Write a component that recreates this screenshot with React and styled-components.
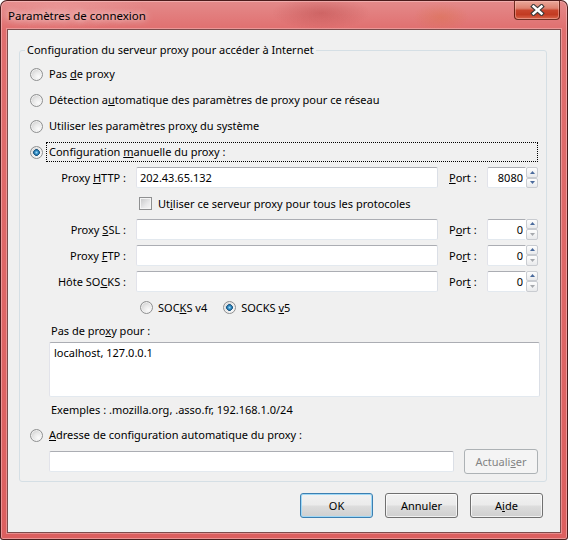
import React from 'react';
import styled, { createGlobalStyle, css } from 'styled-components';

const FONT = `"Noto Sans", "Open Sans", "Liberation Sans", sans-serif`;

const GlobalStyle = createGlobalStyle`
  *, *::before, *::after { box-sizing: border-box; }
  html, body { margin: 0; padding: 0; }
  body {
    width: 568px; height: 540px; overflow: hidden; background: #fff;
    font-family: ${FONT}; font-size: 11px; color: #000;
  }
  u { text-decoration: underline; text-underline-offset: 1px; }
`;

const Window = styled.div`
  width: 568px;
  height: 540px;
  display: flex;
  flex-direction: column;
  padding: 0 6px 6px 6px;
  border: 1px solid rgba(60, 20, 20, 0.9);
  border-radius: 7px 7px 3px 3px;
  background:
    radial-gradient(ellipse 70px 24px at 320px 12px, rgba(160, 40, 40, 0.3), transparent 70%),
    radial-gradient(ellipse 40px 20px at 440px 16px, rgba(215, 110, 60, 0.35), transparent 70%),
    radial-gradient(ellipse 120px 30px at 60px 8px, rgba(240, 170, 170, 0.45), transparent 70%),
    linear-gradient(180deg, #e48a8a 0px, #e06e6e 30px, #dc5f5f 100%);
  box-shadow: inset 0 0 0 1px rgba(255, 215, 215, 0.45);
`;

const TitleBar = styled.div`
  height: 28px;
  display: flex;
  align-items: flex-start;
  justify-content: space-between;
  padding-left: 1px;
`;

const Title = styled.div`
  margin-top: 7px;
  font-size: 11.5px;
  line-height: 15px;
  color: #000;
  text-shadow: 0 0 6px rgba(255, 255, 255, 0.85), 0 0 10px rgba(255, 255, 255, 0.5);
`;

const CloseButton = styled.div`
  width: 46px;
  height: 19px;
  margin-right: 1px;
  display: flex;
  align-items: center;
  justify-content: center;
  border: 1px solid rgba(90, 25, 15, 0.85);
  border-top: none;
  border-radius: 0 0 4px 4px;
  background: linear-gradient(180deg, #eaa89a 0%, #de8270 40%, #c8452d 52%, #c23b22 75%, #d9664c 100%);
  box-shadow: inset 0 0 0 1px rgba(255, 200, 190, 0.45);
`;

const Client = styled.div`
  flex: 1;
  display: flex;
  flex-direction: column;
  background: #f0f0f0;
  border: 1px solid rgba(95, 35, 35, 0.8);
  box-shadow: 0 0 0 1px rgba(255, 225, 225, 0.35);
`;

const GroupBox = styled.fieldset`
  margin: 12px 13px 0 11px;
  padding: 3px 6px 7px 10px;
  border: 1px solid #d5dfe5;
  border-radius: 3px;
  min-width: 0;
`;

const Legend = styled.legend`
  margin-left: -5px;
  padding: 0 2px;
  line-height: 16px;
  font-size: 11px;
`;

const OptionRow = styled.div`
  display: flex;
  align-items: center;
  height: 26px;
`;

const RadioMark = styled.span`
  flex: none;
  width: 13px;
  height: 13px;
  border-radius: 50%;
  border: 1px solid #8f9091;
  background: radial-gradient(circle at 68% 72%, #fbfbfb 0, #e8e8e8 45%, #c2c2c2 100%);
  box-shadow: inset 0 0 0 1px rgba(245, 245, 245, 0.8);
  ${p => p.$checked && css`
    background:
      radial-gradient(circle 3.6px at 5.5px 5.5px, #9ddbf8 0, #3590c8 45%, #15527f 85%, rgba(21, 82, 127, 0) 100%),
      radial-gradient(circle at 68% 72%, #fbfbfb 0, #e8e8e8 45%, #c2c2c2 100%);
  `}
`;

const OptionLabel = styled.span`
  margin-left: 3px;
  padding: 0 2px;
  line-height: 18px;
  white-space: nowrap;
  border: 1px dotted transparent;
  ${p => p.$focused && css`
    flex: 1;
    margin-right: 2px;
    border-color: #000;
  `}
`;

const ProxyGrid = styled.div`
  display: grid;
  grid-template-columns: 106px 313px 38px 52px;
  grid-template-rows: 25px repeat(5, 26px);
  align-items: center;
`;

const FieldLabel = styled.span`
  text-align: right;
  padding-right: 10px;
  white-space: nowrap;
`;

const TextBox = styled.input`
  display: block;
  width: ${p => p.$width || '100%'};
  height: 21px;
  margin: 0;
  padding: 0 3px;
  font-family: ${FONT};
  font-size: 11px;
  color: #000;
  background: #fff;
  border: 1px solid;
  border-color: #abadb3 #dbdfe6 #e3e9ef #e2e3ea;
  border-radius: 2px;
  outline: none;
  flex: ${p => (p.$grow ? 1 : 'none')};
`;

const PortLabel = styled.span`
  white-space: nowrap;
`;

const SpinBox = styled.div`
  display: flex;
  height: 21px;
  width: 51px;
`;

const SpinField = styled.input`
  width: 39px;
  height: 21px;
  margin: 0;
  padding: 0 2px 0 0;
  text-align: right;
  font-family: ${FONT};
  font-size: 11px;
  color: #000;
  background: #fff;
  border: 1px solid;
  border-color: #abadb3 transparent #e3e9ef #e2e3ea;
  border-radius: 2px 0 0 2px;
  outline: none;
`;

const SpinButtons = styled.div`
  width: 12px;
  display: flex;
  flex-direction: column;
`;

const SpinButton = styled.div`
  flex: 1;
  display: flex;
  align-items: center;
  justify-content: center;
  border: 1px solid #c9ccd1;
  border-radius: 2px;
  background: linear-gradient(180deg, #fdfdfd, #e9eaec);
`;

const CheckRow = styled.label`
  grid-column: 2 / span 3;
  display: flex;
  align-items: center;
  padding-left: 3px;
`;

const CheckMark = styled.span`
  flex: none;
  width: 13px;
  height: 13px;
  border: 1px solid #8f9091;
  background: linear-gradient(135deg, #c4c5c6 0%, #e9e9ea 60%, #f7f7f7 100%);
  box-shadow: inset 0 0 0 1px #f5f5f5;
`;

const CheckText = styled.span`
  margin-left: 6px;
  white-space: nowrap;
`;

const SocksRow = styled.div`
  grid-column: 2 / span 3;
  display: flex;
  align-items: center;
  padding-left: 4px;
`;

const SocksOption = styled.span`
  display: flex;
  align-items: center;
  margin-left: ${p => p.$offset || 0}px;
`;

const SocksText = styled.span`
  margin-left: 5px;
`;

const SubSection = styled.div`
  padding-left: 19px;
  display: flex;
  flex-direction: column;
`;

const Caption = styled.div`
  height: 22px;
  line-height: 22px;
  padding-left: 2px;
`;

const TextArea = styled.textarea`
  display: block;
  width: 100%;
  height: 55px;
  margin: 0;
  padding: 2px 4px;
  resize: none;
  font-family: ${FONT};
  font-size: 11px;
  line-height: 16px;
  color: #000;
  background: #fff;
  border: 1px solid;
  border-color: #abadb3 #dbdfe6 #e3e9ef #e2e3ea;
  border-radius: 2px;
  outline: none;
`;

const Hint = styled.div`
  height: 25px;
  line-height: 25px;
  padding-left: 2px;
`;

const UrlRow = styled.div`
  height: 26px;
  display: flex;
  align-items: center;
  gap: 10px;
  padding-left: 19px;
  padding-right: 2px;
`;

const PushButton = styled.button`
  flex: none;
  width: ${p => p.$width || 73}px;
  height: 25px;
  margin: 0;
  padding: 0;
  font-family: ${FONT};
  font-size: 11px;
  color: #000;
  border: 1px solid #707070;
  border-radius: 3px;
  background: linear-gradient(180deg, #f2f2f2 0%, #ebebeb 48%, #dddddd 52%, #cfcfcf 100%);
  box-shadow: inset 0 0 0 1px rgba(255, 255, 255, 0.7);
  ${p => p.$default && css`
    border-color: #3c7fb1;
    box-shadow: inset 0 0 0 1px #9fd8f6;
  `}
  &:disabled {
    color: #838383;
    border-color: #adb2b5;
    background: #f4f4f4;
    box-shadow: none;
  }
`;

const ButtonBar = styled.div`
  display: flex;
  justify-content: flex-end;
  gap: 12px;
  padding: 11px 17px 0 0;
`;

const CloseGlyph = () => (
  <svg width="15" height="12" viewBox="0 0 15 12">
    <path d="M3.5 2.5 L11.5 9.5 M11.5 2.5 L3.5 9.5" stroke="#3a3a3a" strokeWidth="4.6" strokeLinecap="square" fill="none" />
    <path d="M3.5 2.5 L11.5 9.5 M11.5 2.5 L3.5 9.5" stroke="#ffffff" strokeWidth="2.4" strokeLinecap="square" fill="none" />
  </svg>
);

const Arrow = ({ up, color }) => (
  <svg width="5" height="3" viewBox="0 0 5 3">
    <path d={up ? 'M0 3 L2.5 0 L5 3 Z' : 'M0 0 L5 0 L2.5 3 Z'} fill={color} />
  </svg>
);

const Spin = ({ value, downActive }) => (
  <SpinBox>
    <SpinField readOnly value={value} />
    <SpinButtons>
      <SpinButton><Arrow up color="#4a6a9c" /></SpinButton>
      <SpinButton><Arrow color={downActive ? '#4a6a9c' : '#a6a9ad'} /></SpinButton>
    </SpinButtons>
  </SpinBox>
);

const ProxyRow = ({ label, value, port, portLabel, downActive }) => (
  <>
    <FieldLabel>{label}</FieldLabel>
    <TextBox readOnly value={value} $width="302px" />
    <PortLabel>{portLabel}</PortLabel>
    <Spin value={port} downActive={downActive} />
  </>
);

export default function App() {
  return (
    <>
      <GlobalStyle />
      <Window>
        <TitleBar>
          <Title>Paramètres de connexion</Title>
          <CloseButton><CloseGlyph /></CloseButton>
        </TitleBar>
        <Client>
          <GroupBox>
            <Legend>Configuration du serveur proxy pour accéder à Internet</Legend>
            <OptionRow>
              <RadioMark />
              <OptionLabel>Pas <u>d</u>e proxy</OptionLabel>
            </OptionRow>
            <OptionRow>
              <RadioMark />
              <OptionLabel>Détection a<u>u</u>tomatique des paramètres de proxy pour ce réseau</OptionLabel>
            </OptionRow>
            <OptionRow>
              <RadioMark />
              <OptionLabel>Utiliser les paramètres prox<u>y</u> du système</OptionLabel>
            </OptionRow>
            <OptionRow>
              <RadioMark $checked />
              <OptionLabel $focused>Configuration <u>m</u>anuelle du proxy :</OptionLabel>
            </OptionRow>
            <ProxyGrid>
              <ProxyRow
                label={<>Proxy <u>H</u>TTP :</>}
                value="202.43.65.132"
                portLabel={<><u>P</u>ort :</>}
                port="8080"
                downActive
              />
              <CheckRow>
                <CheckMark />
                <CheckText>Ut<u>i</u>liser ce serveur proxy pour tous les protocoles</CheckText>
              </CheckRow>
              <ProxyRow
                label={<>Proxy <u>S</u>SL :</>}
                value=""
                portLabel={<>P<u>o</u>rt :</>}
                port="0"
              />
              <ProxyRow
                label={<>Proxy <u>F</u>TP :</>}
                value=""
                portLabel={<>Po<u>r</u>t :</>}
                port="0"
              />
              <ProxyRow
                label={<>Hôte SO<u>C</u>KS :</>}
                value=""
                portLabel={<>Por<u>t</u> :</>}
                port="0"
              />
              <SocksRow>
                <SocksOption>
                  <RadioMark />
                  <SocksText>SOC<u>K</u>S v4</SocksText>
                </SocksOption>
                <SocksOption $offset={16}>
                  <RadioMark $checked />
                  <SocksText>SOCKS <u>v</u>5</SocksText>
                </SocksOption>
              </SocksRow>
            </ProxyGrid>
            <SubSection>
              <Caption>Pas de pro<u>x</u>y pour :</Caption>
              <TextArea readOnly value="localhost, 127.0.0.1" />
              <Hint>Exemples : .mozilla.org, .asso.fr, 192.168.1.0/24</Hint>
            </SubSection>
            <OptionRow>
              <RadioMark />
              <OptionLabel><u>A</u>dresse de configuration automatique du proxy :</OptionLabel>
            </OptionRow>
            <UrlRow>
              <TextBox readOnly value="" $grow />
              <PushButton disabled $width={74}>Actuali<u>s</u>er</PushButton>
            </UrlRow>
          </GroupBox>
          <ButtonBar>
            <PushButton $default>OK</PushButton>
            <PushButton>Annuler</PushButton>
            <PushButton>A<u>i</u>de</PushButton>
          </ButtonBar>
        </Client>
      </Window>
    </>
  );
}
